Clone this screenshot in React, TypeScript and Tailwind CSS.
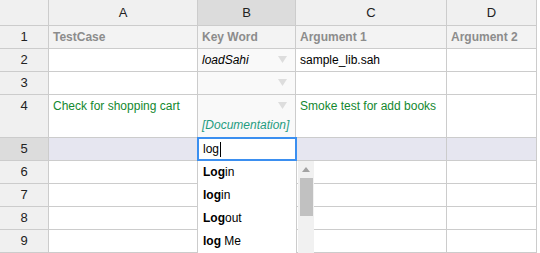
import React from "react";

type Cell = {
  text?: string;
  kind?: "title" | "plain" | "italic" | "green";
  arrow?: boolean;
  doc?: string;
};

type Row = {
  num: number;
  tall?: boolean;
  active?: boolean;
  cells: Cell[];
};

const rows: Row[] = [
  {
    num: 1,
    cells: [
      { text: "TestCase", kind: "title" },
      { text: "Key Word", kind: "title" },
      { text: "Argument 1", kind: "title" },
      { text: "Argument 2", kind: "title" },
    ],
  },
  {
    num: 2,
    cells: [{}, { text: "loadSahi", kind: "italic", arrow: true }, { text: "sample_lib.sah", kind: "plain" }, {}],
  },
  { num: 3, cells: [{}, { arrow: true }, {}, {}] },
  {
    num: 4,
    tall: true,
    cells: [
      { text: "Check for shopping cart", kind: "green" },
      { arrow: true, doc: "[Documentation]" },
      { text: "Smoke test for add books", kind: "green" },
      {},
    ],
  },
  { num: 5, active: true, cells: [{}, {}, {}, {}] },
  { num: 6, cells: [{}, {}, {}, {}] },
  { num: 7, cells: [{}, {}, {}, {}] },
  { num: 8, cells: [{}, {}, {}, {}] },
  { num: 9, cells: [{}, {}, {}, {}] },
];

const suggestions = [
  { match: "Log", rest: "in" },
  { match: "log", rest: "in" },
  { match: "Log", rest: "out" },
  { match: "log", rest: " Me" },
];

function Arrow() {
  return (
    <svg width="9" height="7" viewBox="0 0 9 7" className="absolute right-[8px] top-[7px]">
      <polygon points="0,0 9,0 4.5,7" fill="#dddddd" />
    </svg>
  );
}

function DataCell({ cell, row, col }: { cell: Cell; row: Row; col: number }) {
  let bg = "bg-white";
  if (row.num === 1) bg = "bg-[#f3f3f3]";
  else if (row.active) bg = "bg-[#e6e6f0]";
  else if (col === 1) bg = "bg-[#f9f9f9]";

  let textCls = "text-black";
  if (cell.kind === "title") textCls = "font-bold text-[#8c8c8c]";
  if (cell.kind === "italic") textCls = "italic text-black";
  if (cell.kind === "green") textCls = "text-[#13882f]";

  return (
    <div className={`relative border-r border-b border-[#cccccc] px-[4px] leading-[22px] overflow-hidden whitespace-nowrap ${bg}`}>
      {cell.arrow && <Arrow />}
      {cell.text && <span className={textCls}>{cell.text}</span>}
      {cell.doc && (
        <div className="pt-[22px] leading-[16px] italic text-[#1f9c80]">{cell.doc}</div>
      )}
    </div>
  );
}

export default function App() {
  return (
    <div className="relative w-[540px] h-[253px] overflow-hidden bg-white font-['Liberation_Sans',Arial,sans-serif] text-[12px]">
      <div className="grid w-[537px] grid-cols-[49px_149px_98px_151px_90px] grid-rows-[26px_23px_23px_23px_43px_23px_23px_23px_23px_23px]">
        {/* column headers */}
        <div className="border-r border-b border-[#cccccc] bg-[#f0f0f0]" />
        {["A", "B", "C", "D"].map((c) => (
          <div
            key={c}
            className={`flex items-center justify-center border-r border-b border-[#cccccc] text-[13px] text-[#222] ${
              c === "B" ? "bg-[#dcdcdc]" : "bg-[#f0f0f0]"
            }`}
          >
            {c}
          </div>
        ))}

        {rows.map((row) => (
          <React.Fragment key={row.num}>
            <div
              className={`flex justify-center border-r border-b border-[#cccccc] pt-[3px] text-[13px] leading-[16px] text-[#222] ${
                row.active ? "bg-[#dcdcdc]" : "bg-[#f0f0f0]"
              }`}
            >
              {row.num}
            </div>
            {row.cells.map((cell, i) => (
              <DataCell key={i} cell={cell} row={row} col={i} />
            ))}
          </React.Fragment>
        ))}
      </div>

      {/* cell editor */}
      <div className="absolute left-[197px] top-[137px] w-[100px] h-[24px] border-2 border-[#3b8ff0] bg-white px-[4px] flex items-center">
        <span className="text-black leading-[16px]">log</span>
        <span className="ml-[1px] inline-block w-px h-[15px] bg-black" />
      </div>

      {/* autocomplete list */}
      <div className="absolute left-[197px] top-[161px] bottom-0 w-[100px] border-l border-r border-[#cccccc] bg-white">
        {suggestions.map((s, i) => (
          <div key={i} className="h-[23px] px-[5px] leading-[23px] text-black whitespace-nowrap">
            <b>{s.match}</b>
            {s.rest}
          </div>
        ))}
      </div>

      {/* scrollbar */}
      <div className="absolute left-[298px] top-[161px] bottom-0 w-[16px] bg-[#f1f1f1] flex flex-col items-center">
        <svg width="8" height="5" viewBox="0 0 8 5" className="mt-[6px]">
          <polygon points="4,0 8,5 0,5" fill="#a3a3a3" />
        </svg>
        <div className="mt-[6px] w-[13px] h-[38px] bg-[#c1c1c1]" />
      </div>
    </div>
  );
}
